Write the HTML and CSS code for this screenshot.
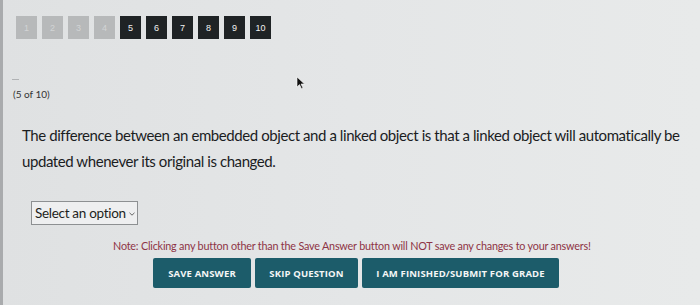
FILE: index.html
```html
<!DOCTYPE html>
<html>
<head>
<meta charset="utf-8">
<link rel="stylesheet" href="styles.css">
</head>
<body>
<div class="page">
  <nav class="pager">
    <span class="pg done">1</span>
    <span class="pg done">2</span>
    <span class="pg done">3</span>
    <span class="pg done">4</span>
    <span class="pg">5</span>
    <span class="pg">6</span>
    <span class="pg">7</span>
    <span class="pg">8</span>
    <span class="pg">9</span>
    <span class="pg">10</span>
  </nav>
  <div class="dash"></div>
  <div class="count">(5 of 10)</div>
  <p class="question">The difference between an embedded object and a linked object is that a linked object will automatically be updated whenever its original is changed.</p>
  <div class="select">Select an option <svg class="chev" width="6" height="4" viewBox="0 0 6 4"><path d="M0.5 0.8 L3 3.2 L5.5 0.8" fill="none" stroke="#555" stroke-width="0.9"/></svg></div>
  <p class="note">Note: Clicking any button other than the Save Answer button will NOT save any changes to your answers!</p>
  <div class="actions">
    <button class="btn save">SAVE ANSWER</button>
    <button class="btn skip">SKIP QUESTION</button>
    <button class="btn finish">I AM FINISHED/SUBMIT FOR GRADE</button>
  </div>
  <svg class="cursor" width="10" height="14" viewBox="0 0 10 14"><path d="M1 1 L1 11 L3.5 8.6 L5.5 12.8 L7 12.1 L5 8 L8.5 8 Z" fill="#111" stroke="#fff" stroke-width="0.6"/></svg>
</div>
</body>
</html>
```
FILE: styles.css
```css
html, body {
  margin: 0;
  padding: 0;
}
body {
  background: linear-gradient(90deg, #dfe1e2 0%, #e4e6e7 50%, #e8eaea 100%);
  width: 700px;
  height: 305px;
  overflow: hidden;
  font-family: "Lato", "Open Sans", sans-serif;
  color: #1d1f21;
}
.page {
  position: relative;
  height: 305px;
  border-left: 3px solid #a9abad;
  box-sizing: border-box;
  padding-left: 13px;
}
.pager {
  display: flex;
  gap: 5px;
  padding-top: 16px;
}
.pg {
  width: 21px;
  height: 23px;
  background: #1f2325;
  color: #f2f2f2;
  font-family: "Liberation Sans", sans-serif;
  font-size: 9px;
  display: flex;
  align-items: center;
  justify-content: center;
}
.pg.done {
  background: #b7b9ba;
  color: #d2d4d5;
}
.dash {
  width: 7px;
  height: 1px;
  background: #b0b2b4;
  margin-top: 40px;
  margin-left: -4px;
}
.count {
  font-size: 10px;
  margin-top: 8px;
  margin-left: -3px;
  color: #333;
}
.question {
  margin: 22px 0 0 6px;
  font-size: 15px;
  line-height: 26px;
  width: 670px;
  letter-spacing: -0.42px;
  color: #1b1d1f;
}
.select {
  display: inline-flex;
  align-items: center;
  gap: 3px;
  margin: 27px 0 0 15px;
  height: 22px;
  padding: 0 2px 0 3px;
  border: 1px solid #8d9092;
  background: #eeeff0;
  font-size: 13.5px;
  letter-spacing: -0.3px;
  color: #1d1f21;
}
.chev {
  margin-top: 1px;
}
.note {
  margin: 14px 0 0 97px;
  font-size: 10.8px;
  color: #8e3445;
  letter-spacing: -0.2px;
}
.actions {
  display: flex;
  gap: 4px;
  margin: 6px 0 0 137px;
}
.btn {
  height: 30px;
  border: none;
  border-radius: 2px;
  background: #1c5c6a;
  color: #f4f6f6;
  font-family: "Open Sans", sans-serif;
  font-weight: 700;
  font-size: 9.5px;
  letter-spacing: 0.15px;
  padding: 0;
}
.save { width: 98px; }
.skip { width: 103px; }
.finish { width: 197px; }
.cursor {
  position: absolute;
  left: 293px;
  top: 76px;
}
```
